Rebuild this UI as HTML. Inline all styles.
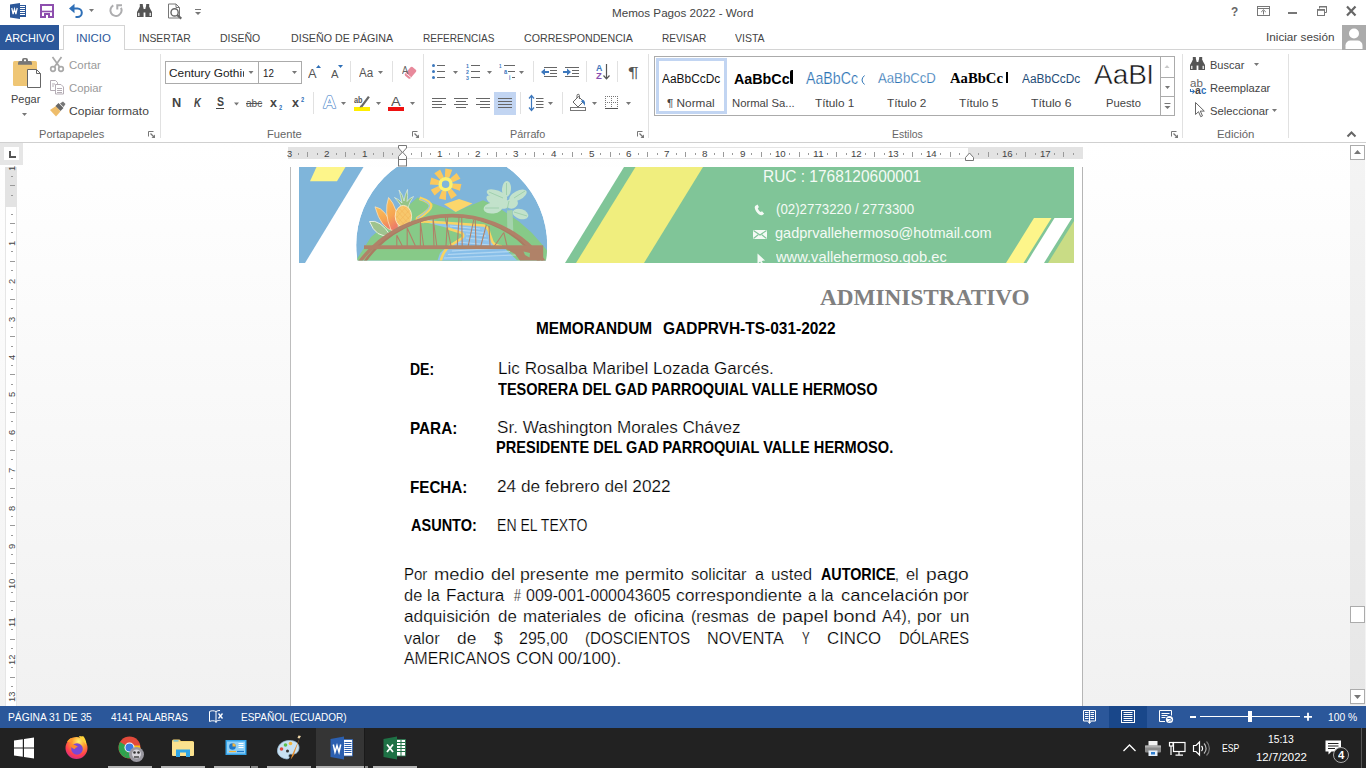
<!DOCTYPE html>
<html><head><meta charset="utf-8"><title>Memos Pagos 2022 - Word</title>
<style>
html,body{margin:0;padding:0;}
body{width:1366px;height:768px;overflow:hidden;position:relative;background:#fff;font-family:"Liberation Sans",sans-serif;}
#r{position:absolute;left:0;top:0;width:1366px;height:768px;overflow:hidden;}
#r div,#r svg,#r span.t{position:absolute;}
#r svg{overflow:visible;}
span.t{white-space:pre;transform-origin:0 0;}
</style></head>
<body><div id="r">
<div style="left:0px;top:143px;width:1366px;height:563px;background:linear-gradient(#ffffff,#fbfbfb 30%,#f1f1f1);"></div>
<div style="left:0px;top:49px;width:1366px;height:1px;background:#d4d4d4;"></div>
<div style="left:0px;top:25px;width:59px;height:25px;background:#2b579a;"></div>
<div style="left:63px;top:25px;width:60px;height:24px;background:#fff;border:1px solid #d4d4d4;border-bottom:none;"></div>
<div style="left:1342px;top:25px;width:24px;height:25px;background:#ababab;"></div>
<div style="left:0px;top:142px;width:1366px;height:1px;background:#d0d0d0;"></div>
<div style="left:160px;top:54px;width:1px;height:84px;background:#e1e1e1;"></div>
<div style="left:423px;top:54px;width:1px;height:84px;background:#e1e1e1;"></div>
<div style="left:648px;top:54px;width:1px;height:84px;background:#e1e1e1;"></div>
<div style="left:1182px;top:54px;width:1px;height:84px;background:#e1e1e1;"></div>
<div style="left:1288px;top:54px;width:1px;height:84px;background:#e1e1e1;"></div>
<div style="left:165px;top:61px;width:92px;height:21px;background:#fff;border:1px solid #ababab;"></div>
<div style="left:258px;top:61px;width:42px;height:21px;background:#fff;border:1px solid #ababab;"></div>
<div style="left:242.5px;top:70.5px;width:1.5px;height:6.5px;background:#444;border-radius:1px 0 0 1px;"></div>
<div style="left:350px;top:61px;width:1px;height:21px;background:#e1e1e1;"></div>
<div style="left:392px;top:61px;width:1px;height:21px;background:#e1e1e1;"></div>
<div style="left:216px;top:108px;width:8px;height:1px;background:#444;"></div>
<div style="left:313px;top:92px;width:1px;height:22px;background:#e1e1e1;"></div>
<div style="left:354px;top:107px;width:16px;height:4px;background:#ffee00;"></div>
<div style="left:388px;top:107px;width:16px;height:4px;background:#ee1111;"></div>
<div style="left:533px;top:61px;width:1px;height:21px;background:#e1e1e1;"></div>
<div style="left:586px;top:61px;width:1px;height:21px;background:#e1e1e1;"></div>
<div style="left:617px;top:61px;width:1px;height:21px;background:#e1e1e1;"></div>
<div style="left:494px;top:92px;width:22px;height:23px;background:#c2d5f2;"></div>
<div style="left:520px;top:92px;width:1px;height:22px;background:#e1e1e1;"></div>
<div style="left:562px;top:92px;width:1px;height:22px;background:#e1e1e1;"></div>
<div style="left:654px;top:56px;width:519px;height:58px;background:#fff;border:1px solid #ababab;"></div>
<div style="left:656px;top:58px;width:65px;height:50px;background:#fff;border:3px solid #c2d5f2;"></div>
<div style="left:790px;top:70px;width:2.5px;height:14px;background:#000;border-radius:2px 0 0 2px;"></div>
<div style="left:1006px;top:72px;width:2px;height:11px;background:#000;"></div>
<div style="left:1090px;top:65px;width:64px;height:24px;overflow:hidden;"><span class="t" id="aab" style="left:4px;top:-3.900px;font-size:28px;line-height:28px;color:#111;-webkit-text-stroke:0.500px #fff;transform:scaleX(1.0);">AaBl</span></div>
<div style="left:1160px;top:56px;width:1px;height:59px;background:#ababab;"></div>
<div style="left:1161px;top:77px;width:13px;height:1px;background:#ababab;"></div>
<div style="left:1161px;top:96px;width:13px;height:1px;background:#ababab;"></div>
<div style="left:0px;top:143px;width:23px;height:22px;background:#e6e6e6;"></div>
<div style="left:4px;top:147px;width:15px;height:13px;background:#fff;"></div>
<div style="left:288px;top:147px;width:795px;height:12px;background:#e3e3e3;"></div>
<div style="left:402px;top:147px;width:566px;height:12px;background:#fff;box-shadow:0 -1px 0 #e4e4e4 inset,0 1px 0 #e4e4e4 inset;"></div>
<div style="left:298px;top:153px;width:1px;height:2px;background:#9a9a9a;"></div>
<div style="left:307px;top:152px;width:1px;height:5px;background:#9a9a9a;"></div>
<div style="left:317px;top:153px;width:1px;height:2px;background:#9a9a9a;"></div>
<div style="left:336px;top:153px;width:1px;height:2px;background:#9a9a9a;"></div>
<div style="left:345px;top:152px;width:1px;height:5px;background:#9a9a9a;"></div>
<div style="left:354px;top:153px;width:1px;height:2px;background:#9a9a9a;"></div>
<div style="left:373px;top:153px;width:1px;height:2px;background:#9a9a9a;"></div>
<div style="left:383px;top:152px;width:1px;height:5px;background:#9a9a9a;"></div>
<div style="left:392px;top:153px;width:1px;height:2px;background:#9a9a9a;"></div>
<div style="left:411px;top:153px;width:1px;height:2px;background:#9a9a9a;"></div>
<div style="left:421px;top:152px;width:1px;height:5px;background:#9a9a9a;"></div>
<div style="left:430px;top:153px;width:1px;height:2px;background:#9a9a9a;"></div>
<div style="left:449px;top:153px;width:1px;height:2px;background:#9a9a9a;"></div>
<div style="left:458px;top:152px;width:1px;height:5px;background:#9a9a9a;"></div>
<div style="left:468px;top:153px;width:1px;height:2px;background:#9a9a9a;"></div>
<div style="left:487px;top:153px;width:1px;height:2px;background:#9a9a9a;"></div>
<div style="left:496px;top:152px;width:1px;height:5px;background:#9a9a9a;"></div>
<div style="left:506px;top:153px;width:1px;height:2px;background:#9a9a9a;"></div>
<div style="left:525px;top:153px;width:1px;height:2px;background:#9a9a9a;"></div>
<div style="left:534px;top:152px;width:1px;height:5px;background:#9a9a9a;"></div>
<div style="left:543px;top:153px;width:1px;height:2px;background:#9a9a9a;"></div>
<div style="left:562px;top:153px;width:1px;height:2px;background:#9a9a9a;"></div>
<div style="left:572px;top:152px;width:1px;height:5px;background:#9a9a9a;"></div>
<div style="left:581px;top:153px;width:1px;height:2px;background:#9a9a9a;"></div>
<div style="left:600px;top:153px;width:1px;height:2px;background:#9a9a9a;"></div>
<div style="left:610px;top:152px;width:1px;height:5px;background:#9a9a9a;"></div>
<div style="left:619px;top:153px;width:1px;height:2px;background:#9a9a9a;"></div>
<div style="left:638px;top:153px;width:1px;height:2px;background:#9a9a9a;"></div>
<div style="left:647px;top:152px;width:1px;height:5px;background:#9a9a9a;"></div>
<div style="left:657px;top:153px;width:1px;height:2px;background:#9a9a9a;"></div>
<div style="left:676px;top:153px;width:1px;height:2px;background:#9a9a9a;"></div>
<div style="left:685px;top:152px;width:1px;height:5px;background:#9a9a9a;"></div>
<div style="left:695px;top:153px;width:1px;height:2px;background:#9a9a9a;"></div>
<div style="left:714px;top:153px;width:1px;height:2px;background:#9a9a9a;"></div>
<div style="left:723px;top:152px;width:1px;height:5px;background:#9a9a9a;"></div>
<div style="left:732px;top:153px;width:1px;height:2px;background:#9a9a9a;"></div>
<div style="left:751px;top:153px;width:1px;height:2px;background:#9a9a9a;"></div>
<div style="left:761px;top:152px;width:1px;height:5px;background:#9a9a9a;"></div>
<div style="left:770px;top:153px;width:1px;height:2px;background:#9a9a9a;"></div>
<div style="left:789px;top:153px;width:1px;height:2px;background:#9a9a9a;"></div>
<div style="left:799px;top:152px;width:1px;height:5px;background:#9a9a9a;"></div>
<div style="left:808px;top:153px;width:1px;height:2px;background:#9a9a9a;"></div>
<div style="left:827px;top:153px;width:1px;height:2px;background:#9a9a9a;"></div>
<div style="left:836px;top:152px;width:1px;height:5px;background:#9a9a9a;"></div>
<div style="left:846px;top:153px;width:1px;height:2px;background:#9a9a9a;"></div>
<div style="left:865px;top:153px;width:1px;height:2px;background:#9a9a9a;"></div>
<div style="left:874px;top:152px;width:1px;height:5px;background:#9a9a9a;"></div>
<div style="left:884px;top:153px;width:1px;height:2px;background:#9a9a9a;"></div>
<div style="left:903px;top:153px;width:1px;height:2px;background:#9a9a9a;"></div>
<div style="left:912px;top:152px;width:1px;height:5px;background:#9a9a9a;"></div>
<div style="left:921px;top:153px;width:1px;height:2px;background:#9a9a9a;"></div>
<div style="left:940px;top:153px;width:1px;height:2px;background:#9a9a9a;"></div>
<div style="left:950px;top:152px;width:1px;height:5px;background:#9a9a9a;"></div>
<div style="left:959px;top:153px;width:1px;height:2px;background:#9a9a9a;"></div>
<div style="left:978px;top:153px;width:1px;height:2px;background:#9a9a9a;"></div>
<div style="left:988px;top:152px;width:1px;height:5px;background:#9a9a9a;"></div>
<div style="left:997px;top:153px;width:1px;height:2px;background:#9a9a9a;"></div>
<div style="left:1016px;top:153px;width:1px;height:2px;background:#9a9a9a;"></div>
<div style="left:1025px;top:152px;width:1px;height:5px;background:#9a9a9a;"></div>
<div style="left:1035px;top:153px;width:1px;height:2px;background:#9a9a9a;"></div>
<div style="left:1054px;top:153px;width:1px;height:2px;background:#9a9a9a;"></div>
<div style="left:1063px;top:152px;width:1px;height:5px;background:#9a9a9a;"></div>
<div style="left:1073px;top:153px;width:1px;height:2px;background:#9a9a9a;"></div>
<div style="left:4.5px;top:167px;width:12px;height:539px;background:#fff;box-shadow:1px 0 0 #e6e6e6 inset,-1px 0 0 #e6e6e6 inset;"></div>
<div style="left:4.5px;top:167px;width:12px;height:39.5px;background:#e3e3e3;"></div>
<span class="t" style="left:7px;top:170.5px;font-size:9.500px;line-height:9.500px;color:#444;transform:rotate(-90deg) scaleX(0.980);transform-origin:0 0;">1</span>
<div style="left:11px;top:176px;width:2px;height:1px;background:#9a9a9a;"></div>
<div style="left:10px;top:185px;width:5px;height:1px;background:#9a9a9a;"></div>
<div style="left:11px;top:195px;width:2px;height:1px;background:#9a9a9a;"></div>
<div style="left:11px;top:214px;width:2px;height:1px;background:#9a9a9a;"></div>
<div style="left:10px;top:223px;width:5px;height:1px;background:#9a9a9a;"></div>
<div style="left:11px;top:232px;width:2px;height:1px;background:#9a9a9a;"></div>
<span class="t" style="left:7px;top:246.1px;font-size:9.500px;line-height:9.500px;color:#444;transform:rotate(-90deg) scaleX(0.980);transform-origin:0 0;">1</span>
<div style="left:11px;top:251px;width:2px;height:1px;background:#9a9a9a;"></div>
<div style="left:10px;top:261px;width:5px;height:1px;background:#9a9a9a;"></div>
<div style="left:11px;top:270px;width:2px;height:1px;background:#9a9a9a;"></div>
<span class="t" style="left:7px;top:283.9px;font-size:9.500px;line-height:9.500px;color:#444;transform:rotate(-90deg) scaleX(0.980);transform-origin:0 0;">2</span>
<div style="left:11px;top:289px;width:2px;height:1px;background:#9a9a9a;"></div>
<div style="left:10px;top:299px;width:5px;height:1px;background:#9a9a9a;"></div>
<div style="left:11px;top:308px;width:2px;height:1px;background:#9a9a9a;"></div>
<span class="t" style="left:7px;top:321.7px;font-size:9.500px;line-height:9.500px;color:#444;transform:rotate(-90deg) scaleX(0.980);transform-origin:0 0;">3</span>
<div style="left:11px;top:327px;width:2px;height:1px;background:#9a9a9a;"></div>
<div style="left:10px;top:336px;width:5px;height:1px;background:#9a9a9a;"></div>
<div style="left:11px;top:346px;width:2px;height:1px;background:#9a9a9a;"></div>
<span class="t" style="left:7px;top:359.5px;font-size:9.500px;line-height:9.500px;color:#444;transform:rotate(-90deg) scaleX(0.980);transform-origin:0 0;">4</span>
<div style="left:11px;top:365px;width:2px;height:1px;background:#9a9a9a;"></div>
<div style="left:10px;top:374px;width:5px;height:1px;background:#9a9a9a;"></div>
<div style="left:11px;top:384px;width:2px;height:1px;background:#9a9a9a;"></div>
<span class="t" style="left:7px;top:397.3px;font-size:9.500px;line-height:9.500px;color:#444;transform:rotate(-90deg) scaleX(0.980);transform-origin:0 0;">5</span>
<div style="left:11px;top:403px;width:2px;height:1px;background:#9a9a9a;"></div>
<div style="left:10px;top:412px;width:5px;height:1px;background:#9a9a9a;"></div>
<div style="left:11px;top:421px;width:2px;height:1px;background:#9a9a9a;"></div>
<span class="t" style="left:7px;top:435.1px;font-size:9.500px;line-height:9.500px;color:#444;transform:rotate(-90deg) scaleX(0.980);transform-origin:0 0;">6</span>
<div style="left:11px;top:440px;width:2px;height:1px;background:#9a9a9a;"></div>
<div style="left:10px;top:450px;width:5px;height:1px;background:#9a9a9a;"></div>
<div style="left:11px;top:459px;width:2px;height:1px;background:#9a9a9a;"></div>
<span class="t" style="left:7px;top:472.9px;font-size:9.500px;line-height:9.500px;color:#444;transform:rotate(-90deg) scaleX(0.980);transform-origin:0 0;">7</span>
<div style="left:11px;top:478px;width:2px;height:1px;background:#9a9a9a;"></div>
<div style="left:10px;top:488px;width:5px;height:1px;background:#9a9a9a;"></div>
<div style="left:11px;top:497px;width:2px;height:1px;background:#9a9a9a;"></div>
<span class="t" style="left:7px;top:510.7px;font-size:9.500px;line-height:9.500px;color:#444;transform:rotate(-90deg) scaleX(0.980);transform-origin:0 0;">8</span>
<div style="left:11px;top:516px;width:2px;height:1px;background:#9a9a9a;"></div>
<div style="left:10px;top:525px;width:5px;height:1px;background:#9a9a9a;"></div>
<div style="left:11px;top:535px;width:2px;height:1px;background:#9a9a9a;"></div>
<span class="t" style="left:7px;top:548.5px;font-size:9.500px;line-height:9.500px;color:#444;transform:rotate(-90deg) scaleX(0.980);transform-origin:0 0;">9</span>
<div style="left:11px;top:554px;width:2px;height:1px;background:#9a9a9a;"></div>
<div style="left:10px;top:563px;width:5px;height:1px;background:#9a9a9a;"></div>
<div style="left:11px;top:573px;width:2px;height:1px;background:#9a9a9a;"></div>
<span class="t" style="left:7px;top:588.9px;font-size:9.500px;line-height:9.500px;color:#444;transform:rotate(-90deg) scaleX(0.980);transform-origin:0 0;">10</span>
<div style="left:11px;top:592px;width:2px;height:1px;background:#9a9a9a;"></div>
<div style="left:10px;top:601px;width:5px;height:1px;background:#9a9a9a;"></div>
<div style="left:11px;top:610px;width:2px;height:1px;background:#9a9a9a;"></div>
<span class="t" style="left:7px;top:626.7px;font-size:9.500px;line-height:9.500px;color:#444;transform:rotate(-90deg) scaleX(0.980);transform-origin:0 0;">11</span>
<div style="left:11px;top:629px;width:2px;height:1px;background:#9a9a9a;"></div>
<div style="left:10px;top:639px;width:5px;height:1px;background:#9a9a9a;"></div>
<div style="left:11px;top:648px;width:2px;height:1px;background:#9a9a9a;"></div>
<span class="t" style="left:7px;top:664.5px;font-size:9.500px;line-height:9.500px;color:#444;transform:rotate(-90deg) scaleX(0.980);transform-origin:0 0;">12</span>
<div style="left:11px;top:667px;width:2px;height:1px;background:#9a9a9a;"></div>
<div style="left:10px;top:677px;width:5px;height:1px;background:#9a9a9a;"></div>
<div style="left:11px;top:686px;width:2px;height:1px;background:#9a9a9a;"></div>
<span class="t" style="left:7px;top:702.3px;font-size:9.500px;line-height:9.500px;color:#444;transform:rotate(-90deg) scaleX(0.980);transform-origin:0 0;">13</span>
<div style="left:1350px;top:145px;width:15px;height:560px;background:rgba(0,0,0,0.045);"></div>
<div style="left:1350px;top:145px;width:13px;height:13px;background:#fff;border:1px solid #ababab;"></div>
<div style="left:1350px;top:689px;width:13px;height:13px;background:#fff;border:1px solid #ababab;"></div>
<div style="left:1350px;top:606px;width:13px;height:15px;background:#fff;border:1px solid #ababab;"></div>
<div style="left:290px;top:167px;width:793px;height:539px;background:#fff;box-sizing:border-box;border-left:1px solid #bdbdbd;border-right:1px solid #b5b5b5;"></div>
<svg style="left:299px;top:167px;overflow:hidden;" width="775" height="96" viewBox="299 167 775 96"><path d="M299 167h64.500L305 263h-6z" fill="#7fb5da"/><path d="M316.500 167h29l-8.500 14.300h-27z" fill="#fdf58a"/><clipPath id="ec"><rect x="350" y="167" width="205" height="93.500"/></clipPath><clipPath id="cc"><circle cx="451.700" cy="245" r="95.500"/></clipPath><g clip-path="url(#ec)"><g clip-path="url(#cc)"><circle cx="451.700" cy="245" r="95.500" fill="#7fb5da"/><path d="M440 262L455 212L483 200.200L497 206.500L508 214L519 221.500L532 233L543 245.600L549 253V262z" fill="#87ca88"/><path d="M355 262L371 237L417.600 197.500L436 204.500L455.700 211.700L462 262z" fill="#87ca88"/><path d="M444 204.300L459 199L472.500 203.600L455.700 211.900z" fill="#fbd66b"/><path d="M424 219.500L448 222L484 224.800L488.500 232.500L491.700 242.300L501.600 245.600L519 262H437L440 253L447 246.500L451 244.500L463 237L462 232.500L448 228L424 222z" fill="#8fc4ec"/><g stroke="#cfe5f7" stroke-width="0.600" fill="none"><path d="M450 226l30 3M452 229.500l32 3M466 234l20 2M466 238l22 2M458 242l32 3M452 251l50-3M448 254.500l62-3M444 258l72-3M470 246.500l24 1"/></g><g stroke="#77b2e2" stroke-width="0.500" fill="none"><path d="M452 227.800l30 3M468 236l20 2M460 244l30 2M450 252.800l55-3M446 256.300l66-3"/></g><path d="M424 221.500L448 223L484 225.500Q488.500 227 489.500 233.500L492.500 242Q495 246 502 246.300" fill="none" stroke="#f9d462" stroke-width="2.400"/><path d="M448 228.500L461.500 232.800Q465 235.500 461.500 238.500L451.500 244.800Q443 250 440.500 262" fill="none" stroke="#f9d462" stroke-width="2.600"/><path d="M419.500 198.300Q431 202 430.700 206.200T417.600 218.300Q416 221 424 221.500" fill="none" stroke="#f9d462" stroke-width="3.600"/><path d="M420.500 199.200Q430 202.500 429.500 206.200T417.300 218.300" fill="none" stroke="#8fc4ec" stroke-width="1.100"/><g transform="translate(445.600 184.200)" fill="#fbc95e"><path d="M-2.300 -7L-3.500 -15.400H3.500L2.300 -7z" transform="rotate(12)"/><path d="M-2.300 -7L-3.500 -15.400H3.500L2.300 -7z" transform="rotate(57)"/><path d="M-2.300 -7L-3.500 -15.400H3.500L2.300 -7z" transform="rotate(102)"/><path d="M-2.300 -7L-3.500 -15.400H3.500L2.300 -7z" transform="rotate(147)"/><path d="M-2.300 -7L-3.500 -15.400H3.500L2.300 -7z" transform="rotate(192)"/><path d="M-2.300 -7L-3.500 -15.400H3.500L2.300 -7z" transform="rotate(237)"/><path d="M-2.300 -7L-3.500 -15.400H3.500L2.300 -7z" transform="rotate(282)"/><path d="M-2.300 -7L-3.500 -15.400H3.500L2.300 -7z" transform="rotate(327)"/></g><circle cx="445.600" cy="184.200" r="5.500" fill="none" stroke="#fdf16d" stroke-width="3.500"/><path d="M507 210.500l5.500-.500.800 21.500h-6z" fill="#a4d3ad"/><g fill="#c2e2cb"><ellipse cx="506.5" cy="189" rx="4.5" ry="8" transform="rotate(5 506.5 189)"/><ellipse cx="497" cy="195" rx="11" ry="4.5" transform="rotate(22 497 195)"/><ellipse cx="518" cy="195.5" rx="9.5" ry="4.5" transform="rotate(-28 518 195.5)"/><ellipse cx="493" cy="208" rx="9.5" ry="5.5" transform="rotate(-8 493 208)"/><ellipse cx="520.5" cy="214" rx="8" ry="5" transform="rotate(18 520.5 214)"/><ellipse cx="502" cy="203" rx="7.5" ry="5.5" transform="rotate(20 502 203)"/><ellipse cx="512" cy="203.5" rx="6" ry="5" transform="rotate(-20 512 203.5)"/><ellipse cx="492.5" cy="200.5" rx="7" ry="3.5" transform="rotate(35 492.5 200.5)"/></g><g stroke="#92c9a2" stroke-width="0.700" fill="none"><path d="M506.500 183v12M489 192l14 6M525 191l-11 7M485 208h14M514 212l13 4M509 201l-2 9"/></g><defs><linearGradient id="cg" x1="0" y1="0" x2="0.300" y2="1"><stop offset="0" stop-color="#f9c05a"/><stop offset="0.600" stop-color="#f6a652"/><stop offset="1" stop-color="#ee7d68"/></linearGradient></defs><path d="M369.500 221.500Q380 219 390.500 235.500Q376 238.500 369.500 221.500z" fill="#9fc38e" stroke="#f1f5ea" stroke-width="0.900"/><path d="M375 206.800Q386 208 394 231Q381 229 375 206.800z" fill="url(#cg)" stroke="#fbe6c4" stroke-width="0.700"/><path d="M388.600 197.500Q398 207 398.500 229.500Q394 232 391 230Q383.500 212 388.600 197.500z" fill="url(#cg)" stroke="#fbe6c4" stroke-width="0.700"/><path d="M403 210q-1.500-5-8.500-12.500q5 2 7.500 5.500q-1.500-8-3-13q4 5 5 11q1-7 3.500-11.500q.5 6-.5 12q3-4 6.500-5q-4 5-6 12.500z" fill="#95c487" stroke="#eef5e8" stroke-width="0.600"/><ellipse cx="403.400" cy="216.300" rx="8.200" ry="10.900" fill="#f7c76c" stroke="#fcecc9" stroke-width="0.900"/><g stroke="#f3b257" stroke-width="0.500"><path d="M397 211l10 11M399 208l10 11M396.500 216l8 9M403 206.500l8 9M409.500 210l-12 13M406 207l-10 11M411 215l-10 11M401.500 206.500l-5 5.500"/></g><path d="M396.8 235.2L396.8 246M396.8 235.2L402.3 246M407.2 228L407.2 246M407.2 228L415.4 246M420.4 222L423.6 246M420.4 222L420.4 246M433 217.7L434 246M433 217.7L436.8 246M445 216L451 246M447.7 216L446 246M459 217L457.3 246M461.7 217L462.2 246M473.7 220L468.2 246M475.3 220L475.9 246M486.3 224.8L480.8 246M489 226L490 246M503.8 232.5L494.5 246M503.8 232.5L507 246" stroke="#b08268" stroke-width="1.100" fill="none"/><circle cx="452" cy="322" r="106" fill="none" stroke="#ab7c62" stroke-width="2.600"/><circle cx="452" cy="330.500" r="115" fill="none" stroke="#b08268" stroke-width="3.500"/><path d="M506 249H543.200V262H521L515 254z" fill="#b08268"/><path d="M523.500 251.500l6.500 1.500-.500 4.500-4.500-2.500z" fill="#87ca88"/><rect x="364" y="245.300" width="179.200" height="3.800" fill="#b08268"/></g></g><path d="M624 167h450v96H565z" fill="#80c598"/><path d="M635.500 167h67.500L644 263h-68z" fill="#f0ee7e"/><path d="M1034 218h17.500l-28 45H1006z" fill="#fdf58a"/><path d="M1054.500 218h17.500l-28 45h-17.500z" fill="#fff"/><path d="M1074 221v42h-26z" fill="#c9dc85"/><path d="M756 205.500c-1.800.8-1.600 3.200.200 6 1.900 2.900 4.600 4.600 6.300 3.500l1.700-1.300-2.200-2.500-1.300.8c-.9-.2-2.800-2.500-2.900-3.900l1.200-.9-1.500-2.600z" fill="#f4faf5"/><rect x="753" y="230" width="14" height="9" fill="#f4faf5"/><path d="M753.500 230.500l6.500 4.500 6.500-4.500M753.500 238.500l4.700-3.700M766.500 238.500l-4.700-3.700" fill="none" stroke="#80c598" stroke-width="1.100"/><path d="M757.500 253.500v10.500l2.600-2.400 1.800 3.400 1.600-.800-1.800-3.300 3.400-.300z" fill="#f4faf5"/></svg>
<div style="left:0px;top:706px;width:1366px;height:22px;background:#2b579a;"></div>
<div style="left:1109px;top:706px;width:38px;height:22px;background:#19478a;"></div>
<div style="left:1190px;top:716px;width:6px;height:2px;background:#fff;"></div>
<div style="left:1200px;top:716px;width:100px;height:1px;background:#fff;"></div>
<div style="left:1248px;top:711px;width:4px;height:11px;background:#fff;"></div>
<div style="left:0px;top:728px;width:1366px;height:40px;background:#222222;"></div>
<div style="left:316px;top:728px;width:48px;height:40px;background:#353535;"></div>
<div style="left:364px;top:728px;width:1px;height:40px;background:#1a1a1a;"></div>
<div style="left:108px;top:766px;width:44px;height:2px;background:#b4b4b4;"></div>
<div style="left:161px;top:766px;width:44px;height:2px;background:#b4b4b4;"></div>
<div style="left:214px;top:766px;width:36px;height:2px;background:#b4b4b4;"></div>
<div style="left:267px;top:766px;width:44px;height:2px;background:#b4b4b4;"></div>
<div style="left:316px;top:766px;width:48px;height:2px;background:#b4b4b4;"></div>
<div style="left:373px;top:766px;width:44px;height:2px;background:#b4b4b4;"></div>
<div style="left:250px;top:766px;width:1px;height:2px;background:#222;"></div>
<div style="left:251px;top:766px;width:7px;height:2px;background:#8a8a8a;"></div>
<div style="left:365px;top:766px;width:3px;height:2px;background:#8a8a8a;"></div>
<div style="left:1361px;top:728px;width:1px;height:40px;background:#555;"></div>
<svg style="left:0px;top:0px;" width="1366" height="768" viewBox="0 0 1366 768"><rect x="17.5" y="5.5" width="8" height="11" fill="#fff" stroke="#2b579a"/><path d="M19 7.500h6M19 9.500h6M19 11.500h6M19 13.500h6M19 15.500h6" stroke="#2b579a" stroke-width="1"/><path d="M10 4.6L20 3v16L10 17.4z" fill="#2b579a"/><path d="M11.8 8l1.3 6 1.4-5 1.4 5 1.3-6" fill="none" stroke="#fff" stroke-width="1.2"/><path d="M41 5h12v12H41z" fill="#fff" stroke="#8e4fae" stroke-width="2"/><path d="M41 11.5h12" stroke="#8e4fae" stroke-width="1.6"/><path d="M44 13h6v5h-6z" fill="#8e4fae"/><path d="M46 15h2v3h-2z" fill="#fff"/><path d="M71 8.5h6.5a4.3 4.3 0 0 1 0 8.6h-2" fill="none" stroke="#2e6fb7" stroke-width="2"/><path d="M69 8.5l5.5-4.7v9.4z" fill="#2e6fb7"/><path d="M89 9h5l-2.5 3z" fill="#777"/><path d="M113.300 5.400A5.600 5.600 0 1 0 121 7.800" fill="none" stroke="#adadaf" stroke-width="2"/><path d="M117.300 9.500V5.200H122" fill="none" stroke="#adadaf" stroke-width="2"/><g transform="translate(137 4)" fill="#555"><path d="M2 4.5L3.2 1.5h2.6L6.6 4.5V13H0V8z"/><path d="M13 4.5L11.8 1.5H9.2L8.4 4.5V13H15V8z"/><rect x="2.8" y="0" width="3" height="2"/><rect x="9.2" y="0" width="3" height="2"/><rect x="6" y="5" width="3" height="3.5"/><rect x="1.2" y="8.8" width="1.2" height="3.2" fill="#fff"/><rect x="12.6" y="8.8" width="1.2" height="3.2" fill="#fff"/></g><path d="M168.5 4h7.5l3.5 3.5V18h-11z" fill="#fff" stroke="#777" stroke-width="1"/><path d="M176 4v3.5h3.5" fill="none" stroke="#777"/><circle cx="174.6" cy="12.4" r="3.6" fill="#fff" stroke="#666" stroke-width="1.4"/><path d="M177.3 15.2l4 3.4" stroke="#666" stroke-width="2.2"/><path d="M195 9.5h6" stroke="#777"/><path d="M195 12h6l-3 3z" fill="#777"/><rect x="1257.5" y="6.5" width="12" height="9" fill="none" stroke="#777"/><path d="M1258 8.5h11" stroke="#777"/><path d="M1263.5 14.5v-4M1261.2 12l2.3-2.2 2.3 2.2" fill="none" stroke="#777" stroke-width="1"/><rect x="1288" y="12" width="9" height="2" fill="#777"/><path d="M1319.5 8.5v-2h7v6h-2" fill="none" stroke="#777"/><path d="M1319 6.8h8" stroke="#777" stroke-width="1.4"/><rect x="1317.500" y="9.5" width="7" height="6" fill="#fff" stroke="#777"/><path d="M1317 10h8" stroke="#777" stroke-width="1.6"/><path d="M1347 6.5l8.500 9M1355.500 6.5l-8.500 9" stroke="#666" stroke-width="2.2"/><circle cx="1354" cy="33.500" r="5" fill="#fff"/><path d="M1345.500 49v-3.500a5 5 0 0 1 5-5h7a5 5 0 0 1 5 5V49z" fill="#fff"/><path d="M148.5 136.5V131.5H153.5" fill="none" stroke="#777" stroke-width="1"/><path d="M150.5 133.5L154.5 137.5" stroke="#777" stroke-width="1.2"/><path d="M155 134.5V138H151.5z" fill="#777"/><path d="M412.5 136.5V131.5H417.5" fill="none" stroke="#777" stroke-width="1"/><path d="M414.5 133.5L418.5 137.5" stroke="#777" stroke-width="1.2"/><path d="M419 134.5V138H415.5z" fill="#777"/><path d="M637.5 136.5V131.5H642.5" fill="none" stroke="#777" stroke-width="1"/><path d="M639.5 133.5L643.5 137.5" stroke="#777" stroke-width="1.2"/><path d="M644 134.5V138H640.5z" fill="#777"/><path d="M1171.5 136.5V131.5H1176.5" fill="none" stroke="#777" stroke-width="1"/><path d="M1173.5 133.5L1177.5 137.5" stroke="#777" stroke-width="1.2"/><path d="M1178 134.5V138H1174.5z" fill="#777"/><path d="M1347.500 136.500l4-4 4 4" fill="none" stroke="#666" stroke-width="2"/><rect x="13" y="61" width="24" height="25" rx="1.5" fill="#efc675"/><path d="M18 64.700v-1.700a2 2 0 0 1 2-2h2v-1a2 2 0 0 1 2-2h2a2 2 0 0 1 2 2v1h2a2 2 0 0 1 2 2v1.700z" fill="#777"/><rect x="24" y="59.500" width="2" height="1.700" fill="#fff"/><path d="M27.500 69.500h9l4 4v14h-13z" fill="#fff" stroke="#666"/><path d="M36.500 69.500v4h4" fill="none" stroke="#666"/><path d="M22 113h5l-2.5 3z" fill="#777"/><g fill="none" stroke="#a9a9a9" stroke-width="1.700"><path d="M52.500 57l7.500 10.500M61.500 57l-7.500 10.500"/><circle cx="53" cy="69" r="2.300"/><circle cx="61" cy="69" r="2.300"/></g><g fill="#fff" stroke="#b5adb5" stroke-width="1"><path d="M50.500 80.500h5l2 2v8h-7z"/><path d="M55.500 84.500h5.500l2.500 2.500v7h-8z"/></g><path d="M57 88.500h5M57 90.500h5M57 92.500h5M52 84h3M52 86h2" stroke="#b5adb5" stroke-width="1"/><path d="M50 110l6-4 4.500 5.500-4.500 5z" fill="#eebd6b"/><path d="M55.500 106l3-3 5 5-3 3z" fill="#666"/><path d="M60 103.500l3-2 2.500 2.500-2 3z" fill="#777"/><path d="M248.5 71h5l-2.5 3z" fill="#777"/><path d="M292 71h5l-2.5 3z" fill="#777"/><path d="M316 68l2.500-3 2.500 3z" fill="#2e6fb7"/><path d="M338 65h5l-2.500 3z" fill="#2e6fb7"/><path d="M378 71h5l-2.5 3z" fill="#777"/><path d="M410.500 67.300a1.500 1.500 0 0 1 2-.200l3.300 2.700a1.500 1.500 0 0 1 .200 2l-5.500 6.500a1.500 1.500 0 0 1-2 .200l-3.300-2.700a1.500 1.500 0 0 1-.200-2z" fill="#e8899b"/><path d="M405.600 73l5.400 4.500" stroke="#fff" stroke-width="0.900"/><path d="M234 102.5h5l-2.5 3z" fill="#777"/><path d="M341 102h5l-2.5 3z" fill="#777"/><path d="M360.500 106l7.500-10 1.800 1.300-7.500 10z" fill="#666"/><path d="M359.500 107.500l1-2 2 1.500z" fill="#666"/><path d="M376 102h5l-2.5 3z" fill="#777"/><path d="M410 102h5l-2.5 3z" fill="#777"/><circle cx="433.500" cy="65.5" r="1.500" fill="#3d78bd"/><path d="M437 65.5h8" stroke="#666" stroke-width="1"/><circle cx="433.500" cy="71.5" r="1.500" fill="#3d78bd"/><path d="M437 71.5h8" stroke="#666" stroke-width="1"/><circle cx="433.500" cy="77.5" r="1.500" fill="#3d78bd"/><path d="M437 77.5h8" stroke="#666" stroke-width="1"/><path d="M453 71h5l-2.5 3z" fill="#777"/><path d="M471 65.5h9" stroke="#666" stroke-width="1"/><path d="M471 71.5h9" stroke="#666" stroke-width="1"/><path d="M471 77.5h9" stroke="#666" stroke-width="1"/><path d="M487 71h5l-2.5 3z" fill="#777"/><path d="M504 65.500h11" stroke="#666"/><path d="M508 71.500h7" stroke="#666"/><path d="M512 77.500h3" stroke="#666"/><path d="M519 71h5l-2.5 3z" fill="#777"/><path d="M544 67.500h13M550 70.500h7M550 73.500h7M544 76.500h13" stroke="#666"/><path d="M541 72l4-3.500v2.500h4v2h-4v2.500z" fill="#3d78bd"/><path d="M565 67.500h14M572 70.500h7M572 73.500h7M565 76.500h14" stroke="#666"/><path d="M571 72l-4-3.500v2.500h-4v2h4v2.500z" fill="#3d78bd"/><path d="M606.500 64v14M603.500 75.500l3 3.300 3-3.300" fill="none" stroke="#555" stroke-width="1.200"/><path d="M432 98.5h14" stroke="#666" stroke-width="1"/><path d="M432 101.5h10" stroke="#666" stroke-width="1"/><path d="M432 104.5h14" stroke="#666" stroke-width="1"/><path d="M432 107.5h10" stroke="#666" stroke-width="1"/><path d="M454.0 98.5h14" stroke="#666" stroke-width="1"/><path d="M456.0 101.5h10" stroke="#666" stroke-width="1"/><path d="M454.0 104.5h14" stroke="#666" stroke-width="1"/><path d="M456.0 107.5h10" stroke="#666" stroke-width="1"/><path d="M476 98.5h14" stroke="#666" stroke-width="1"/><path d="M480 101.5h10" stroke="#666" stroke-width="1"/><path d="M476 104.5h14" stroke="#666" stroke-width="1"/><path d="M480 107.5h10" stroke="#666" stroke-width="1"/><path d="M498 98.5h14" stroke="#666" stroke-width="1"/><path d="M498 101.5h14" stroke="#666" stroke-width="1"/><path d="M498 104.5h14" stroke="#666" stroke-width="1"/><path d="M498 107.5h14" stroke="#666" stroke-width="1"/><path d="M531.500 96v14M529 98.500l2.500-3 2.500 3M529 107.500l2.500 3 2.500-3" fill="none" stroke="#3d78bd" stroke-width="1.200"/><path d="M536 98.500h7.500M536 101.500h7.500M536 104.500h7.500M536 107.500h7.500" stroke="#666"/><path d="M548 102h5l-2.5 3z" fill="#777"/><path d="M573 102l5.500-5.500 5 5-5.500 5.500z" fill="#fff" stroke="#666"/><path d="M577 98v-2.500a1.200 1.200 0 0 1 2.400 0V99" fill="none" stroke="#666"/><path d="M582.500 99.500c2.500 1 3.300 3.500 2 6.500-.5-2-1.500-3.500-3.500-4.500z" fill="#3d78bd"/><rect x="570.500" y="107.500" width="15" height="3" fill="#fff" stroke="#777"/><path d="M592 102h5l-2.5 3z" fill="#777"/><g stroke="#777" stroke-dasharray="1 1"><path d="M605 96.500h13M605 102.500h13M605.500 96v12M611.500 96v12M617.500 96v12"/></g><path d="M605 108.500h13" stroke="#555"/><path d="M626 102h5l-2.5 3z" fill="#777"/><path d="M864.500 75.500Q859.500 80 864.500 84.500" stroke="#2e74b5" fill="none" stroke-width="1"/><path d="M1164.500 68l2.500-3 2.500 3z" fill="#c8c8c8"/><path d="M1165 86h5l-2.5 3z" fill="#777"/><path d="M1164.500 103.500h6" stroke="#777"/><path d="M1164.500 106h6l-3 3z" fill="#777"/><g transform="translate(1190 57)" fill="#555"><path d="M2 4.5L3.2 1.5h2.6L6.6 4.5V13H0V8z"/><path d="M13 4.5L11.8 1.5H9.2L8.4 4.5V13H15V8z"/><rect x="2.8" y="0" width="3" height="2"/><rect x="9.2" y="0" width="3" height="2"/><rect x="6" y="5" width="3" height="3.5"/><rect x="1.2" y="8.8" width="1.2" height="3.2" fill="#fff"/><rect x="12.6" y="8.8" width="1.2" height="3.2" fill="#fff"/></g><path d="M1254 63h5l-2.5 3z" fill="#777"/><path d="M1190.500 89v2.500h3.500M1192.500 89.500l1.800 2-1.800 2" fill="none" stroke="#2e6fb7" stroke-width="1.100"/><path d="M1195.500 102.500v12l3-2.800 2.200 5 1.800-.8-2.200-4.800h4z" fill="#fff" stroke="#666" stroke-width="1" stroke-linejoin="round"/><path d="M1272 109h5l-2.5 3z" fill="#777"/><path d="M10 151v6h6" fill="none" stroke="#555" stroke-width="2"/><path d="M398.500 145.500h8v2.500l-4 4.500-4-4.500z" fill="#fff" stroke="#777"/><path d="M398.500 159v-2.500l4-4.500 4 4.500V159" fill="#fff" stroke="#777"/><rect x="398.500" y="159.500" width="8" height="6.500" fill="#fff" stroke="#777"/><path d="M965.500 160.500v-3l4-4.500 4 4.500v3z" fill="#fff" stroke="#777"/><path d="M1354 154h7l-3.500-4z" fill="#777"/><path d="M1354 695h7l-3.500 4z" fill="#777"/><path d="M216 711.500c-2-1-4.500-1-6.500 0v10c2-1 4.500-1 6.500 0 1.500-1 3-1.300 4.500-1" fill="none" stroke="#fff" stroke-width="1"/><path d="M216 711.500v11.500M216 711.500c1.300-.800 2.500-1 4-1" fill="none" stroke="#fff"/><path d="M218.500 713.500l4 5M222.500 713.500l-4 5" stroke="#fff" stroke-width="1.300"/><g fill="none" stroke="#fff" stroke-width="1"><path d="M1083.500 710.500h12v10.500h-12zM1089.500 710.500v12.500"/><path d="M1085 712.500h3.500M1085 714.500h3.500M1085 716.500h3.500M1085 718.500h3.500M1090.500 712.500h3.500M1090.500 714.500h3.500M1090.500 716.500h3.500M1090.500 718.500h3.500" stroke-width="1"/><path d="M1088 721.500l1.500 2 1.500-2" stroke-width="1"/></g><rect x="1121.500" y="710.500" width="13" height="12" fill="none" stroke="#fff"/><path d="M1123.500 712.500h9M1123.500 714.500h9M1123.500 716.500h9M1123.500 718.500h9M1123.500 720.500h9" stroke="#fff"/><path d="M1165 721.500h-5.500v-11h12v5" fill="none" stroke="#fff"/><path d="M1161.500 713.500h8M1161.500 715.500h6M1161.500 717.500h4" stroke="#fff"/><circle cx="1169.500" cy="719.500" r="3.600" fill="#fff"/><path d="M1167.500 718.500h3l1 1.500-1.500 1.500M1168.500 721.500l1-1" stroke="#2b579a" stroke-width="0.900" fill="none"/><path d="M1304 716.800h8M1308 712.800v8" stroke="#fff" stroke-width="1.800"/><path d="M14 740.500l8.800-1.300v8.300H14zM24 739l10-1.500v10H24zM14 748.500h8.800v8.300L14 755.500zM24 748.500h10v10L24 757z" fill="#fff"/><defs><radialGradient id="ff" cx="0.6" cy="0.200" r="0.900"><stop offset="0" stop-color="#fff36b"/><stop offset="0.350" stop-color="#ff9a2e"/><stop offset="0.700" stop-color="#ff3d50"/><stop offset="1" stop-color="#c2279f"/></radialGradient></defs><circle cx="76.500" cy="748" r="11" fill="url(#ff)"/><path d="M79 736c1 3 5 5 7 9 1-3-1-7-3-9-1 1-2 0-4 0z" fill="#ffd43a"/><path d="M67 742c1-2 3-4 5-4-1 2 0 3 1 4z" fill="#ff9a2e"/><circle cx="77" cy="749" r="5.800" fill="#7b47d6"/><path d="M70 745c3-1 6 0 8 2-2 0-3 1-3 2-2 0-4-2-5-4z" fill="#ff8a2a"/><circle cx="129.500" cy="747.500" r="11" fill="#e24a3b"/><path d="M129.500 747.500L120 742a11 11 0 0 0 4 15z" fill="#2da44f"/><path d="M129.500 747.500l-5.500 9.500a11 11 0 0 0 15.500-6z" fill="#2da44f"/><path d="M129.500 747.500h11a11 11 0 0 1-5.500 9.600z" fill="#fbc116"/><path d="M129.500 747.500h10.500" stroke="#fbc116" stroke-width="4"/><circle cx="129.500" cy="747.500" r="5" fill="#fff"/><circle cx="129.500" cy="747.500" r="4" fill="#3c7be0"/><circle cx="136.500" cy="754.500" r="7.500" fill="#9a98a0"/><circle cx="136.500" cy="754" r="4.500" fill="#d8d6dc"/><circle cx="134.500" cy="752.500" r="1.300" fill="#333"/><circle cx="138.500" cy="752.500" r="1.300" fill="#333"/><path d="M134 757h5" stroke="#444" stroke-width="1.500"/><path d="M172 741a1.500 1.500 0 0 1 1.500-1.500h6l1.500 1.500h11.500a1.500 1.500 0 0 1 1.500 1.500V755H172z" fill="#f8d775"/><rect x="172" y="742" width="22" height="14" rx="1" fill="#fbe28f"/><path d="M176 757v-7.500h14V757h-4v-4.500h-6V757z" fill="#2fa5e6"/><rect x="173.500" y="740.300" width="5" height="1.200" fill="#5bc1f2"/><rect x="225.500" y="740" width="21" height="15" fill="#34a3e8"/><rect x="227" y="741.500" width="18" height="12" fill="#8fd0f7"/><circle cx="232.500" cy="746.500" r="3.300" fill="#1f78c8"/><path d="M232.500 746.500v-3.300a3.300 3.300 0 0 1 3.300 3.300z" fill="#f2b43c"/><path d="M238.500 743.500h5M238.500 745.500h5M238.500 747.500h5" stroke="#fff" stroke-width="1.200"/><path d="M229 751.500h7" stroke="#f2b43c" stroke-width="1.200"/><path d="M237 751.500h7" stroke="#1f78c8" stroke-width="1.200"/><path d="M277.500 751c0-6 5-10.500 12-10.500 6 0 9.500 3 9.500 7 0 5-4 7.500-8 6.500-2-.500-3 1.500-2 3s-1.500 2.500-4.500 1.500c-4.500-1.500-7-4-7-7.500z" fill="#c8e1f2" stroke="#9dbfd8" stroke-width="0.800"/><circle cx="281.500" cy="749" r="1.800" fill="#e0483c"/><circle cx="285.500" cy="745" r="1.800" fill="#5bbf4a"/><circle cx="290.500" cy="743.500" r="1.800" fill="#f2b43c"/><circle cx="287.500" cy="751" r="1.500" fill="#333"/><path d="M299.500 738.500l-7.500 16.500-1.300 4.500 2.800-3.800z" fill="#e58e2f"/><path d="M299.500 738.500l1.500-2.500-2.500-.500-1 2.500z" fill="#f0d7a8"/><rect x="343" y="739.500" width="9.500" height="16.500" fill="#fff" stroke="#2b5fb0" stroke-width="0.800"/><path d="M344.500 742.500h7M344.500 744.500h7M344.500 746.500h7M344.500 748.500h7M344.500 750.500h7M344.500 752.500h7" stroke="#2b5fb0" stroke-width="1"/><path d="M330.500 739l13.500-2.500v23l-13.500-2.500z" fill="#2b5fb0"/><path d="M333.300 744.500l1.700 7.500 2-6.500 2 6.500 1.700-7.500" fill="none" stroke="#fff" stroke-width="1.500"/><rect x="396" y="739.500" width="9.500" height="16.500" fill="#fff" stroke="#1e7145" stroke-width="0.800"/><path d="M397 742.500h8M397 745.500h8M397 748.500h8M397 751.500h8M401 740v16" stroke="#1e7145" stroke-width="1"/><path d="M383.500 739l13.500-2.500v23l-13.500-2.500z" fill="#1e7145"/><path d="M387 744.500l6 7.500M393 744.500l-6 7.500" fill="none" stroke="#fff" stroke-width="1.800"/><path d="M1123.500 751l6-6 6 6" fill="none" stroke="#fff" stroke-width="1.300"/><rect x="1148.500" y="741" width="9" height="5" fill="#f2f2f2"/><rect x="1145" y="745.500" width="16" height="7" rx="1" fill="#8a8a8a"/><rect x="1148.500" y="750.500" width="9" height="5.500" fill="#e8f1fb"/><rect x="1151" y="752" width="4" height="2.500" fill="#2f7fd0"/><rect x="1145" y="745.500" width="16" height="2" fill="#b0b0b0"/><g fill="none" stroke="#fff" stroke-width="1.200"><rect x="1173.500" y="742.500" width="11.500" height="9"/><path d="M1179 751.500v3.500M1175.500 755.200h7.500M1171 742v13"/><rect x="1169.500" y="742.500" width="3.500" height="3.500" fill="#222"/></g><g fill="none" stroke="#fff" stroke-width="1.200"><path d="M1193.500 745.500h2.500l3.500-3.500v13l-3.500-3.500h-2.500z"/><path d="M1201.500 746a3.500 3.500 0 0 1 0 5"/><path d="M1204 743.500a7 7 0 0 1 0 10" stroke="#bbb"/><path d="M1206.500 741.500a10 10 0 0 1 0 14" stroke="#777"/></g><path d="M1325.500 740.500h15.500v11h-9.500l-3 3v-3h-3z" fill="#fff"/><path d="M1328 743.500h10.500M1328 746h10.500M1328 748.500h7" stroke="#222" stroke-width="1"/><circle cx="1341" cy="755" r="7.500" fill="#222" stroke="#aaa" stroke-width="1"/></svg>
<span class="t" style='left:611.50px;top:7.80px;font-family:"Liberation Sans", sans-serif;font-size:11.5px;line-height:11.5px;color:#444444;transform:scaleX(1.0117);'>Memos Pagos 2022 - Word</span>
<span class="t" style='left:1231.00px;top:5.00px;font-family:"Liberation Sans", sans-serif;font-size:13.5px;line-height:13.5px;color:#666;font-weight:700;transform:scaleX(0.8750);'>?</span>
<span class="t" style='left:4.50px;top:32.60px;font-family:"Liberation Sans", sans-serif;font-size:11.5px;line-height:11.5px;color:#fff;transform:scaleX(0.9437);'>ARCHIVO</span>
<span class="t" style='left:75.51px;top:32.60px;font-family:"Liberation Sans", sans-serif;font-size:11.5px;line-height:11.5px;color:#2b579a;transform:scaleX(0.9943);'>INICIO</span>
<span class="t" style='left:139.49px;top:32.60px;font-family:"Liberation Sans", sans-serif;font-size:11.5px;line-height:11.5px;color:#444444;transform:scaleX(0.9053);'>INSERTAR</span>
<span class="t" style='left:220.30px;top:32.60px;font-family:"Liberation Sans", sans-serif;font-size:11.5px;line-height:11.5px;color:#444444;transform:scaleX(0.9129);'>DISEÑO</span>
<span class="t" style='left:290.50px;top:32.60px;font-family:"Liberation Sans", sans-serif;font-size:11.5px;line-height:11.5px;color:#444444;transform:scaleX(0.9298);'>DISEÑO DE PÁGINA</span>
<span class="t" style='left:422.50px;top:32.60px;font-family:"Liberation Sans", sans-serif;font-size:11.5px;line-height:11.5px;color:#444444;transform:scaleX(0.8743);'>REFERENCIAS</span>
<span class="t" style='left:523.60px;top:32.60px;font-family:"Liberation Sans", sans-serif;font-size:11.5px;line-height:11.5px;color:#444444;transform:scaleX(0.9262);'>CORRESPONDENCIA</span>
<span class="t" style='left:662.00px;top:32.60px;font-family:"Liberation Sans", sans-serif;font-size:11.5px;line-height:11.5px;color:#444444;transform:scaleX(0.8768);'>REVISAR</span>
<span class="t" style='left:734.70px;top:32.60px;font-family:"Liberation Sans", sans-serif;font-size:11.5px;line-height:11.5px;color:#444444;transform:scaleX(0.9142);'>VISTA</span>
<span class="t" style='left:1266.48px;top:32.00px;font-family:"Liberation Sans", sans-serif;font-size:11.5px;line-height:11.5px;color:#444444;transform:scaleX(1.0195);'>Iniciar sesión</span>
<span class="t" style='left:38.50px;top:129.00px;font-family:"Liberation Sans", sans-serif;font-size:11.5px;line-height:11.5px;color:#666666;transform:scaleX(0.9629);'>Portapapeles</span>
<span class="t" style='left:266.60px;top:129.00px;font-family:"Liberation Sans", sans-serif;font-size:11.5px;line-height:11.5px;color:#666666;transform:scaleX(0.9716);'>Fuente</span>
<span class="t" style='left:510.00px;top:129.00px;font-family:"Liberation Sans", sans-serif;font-size:11.5px;line-height:11.5px;color:#666666;transform:scaleX(0.9379);'>Párrafo</span>
<span class="t" style='left:892.00px;top:129.00px;font-family:"Liberation Sans", sans-serif;font-size:11.5px;line-height:11.5px;color:#666666;transform:scaleX(0.9085);'>Estilos</span>
<span class="t" style='left:1216.50px;top:129.00px;font-family:"Liberation Sans", sans-serif;font-size:11.5px;line-height:11.5px;color:#666666;transform:scaleX(0.9914);'>Edición</span>
<span class="t" style='left:10.50px;top:93.80px;font-family:"Liberation Sans", sans-serif;font-size:11.5px;line-height:11.5px;color:#444444;transform:scaleX(0.9560);'>Pegar</span>
<span class="t" style='left:69.00px;top:60.00px;font-family:"Liberation Sans", sans-serif;font-size:11.5px;line-height:11.5px;color:#9a9a9a;transform:scaleX(0.9962);'>Cortar</span>
<span class="t" style='left:69.00px;top:83.00px;font-family:"Liberation Sans", sans-serif;font-size:11.5px;line-height:11.5px;color:#9a9a9a;transform:scaleX(0.9839);'>Copiar</span>
<span class="t" style='left:69.00px;top:106.00px;font-family:"Liberation Sans", sans-serif;font-size:11.5px;line-height:11.5px;color:#444444;transform:scaleX(1.0507);'>Copiar formato</span>
<span class="t" style='left:168.50px;top:68.00px;font-family:"Liberation Sans", sans-serif;font-size:11.5px;line-height:11.5px;color:#222;transform:scaleX(1.0299);'>Century Gothi</span>
<span class="t" style='left:262.50px;top:68.00px;font-family:"Liberation Sans", sans-serif;font-size:11.5px;line-height:11.5px;color:#222;transform:scaleX(0.8471);'>12</span>
<span class="t" style='left:308.30px;top:66.50px;font-family:"Liberation Sans", sans-serif;font-size:13px;line-height:13px;color:#555;transform:scaleX(0.9889);'>A</span>
<span class="t" style='left:331.00px;top:68.50px;font-family:"Liberation Sans", sans-serif;font-size:10.5px;line-height:10.5px;color:#555;transform:scaleX(1.0714);'>A</span>
<span class="t" style='left:358.50px;top:66.50px;font-family:"Liberation Sans", sans-serif;font-size:12px;line-height:12px;color:#555;transform:scaleX(0.9664);'>Aa</span>
<span class="t" style='left:401.50px;top:65.00px;font-family:"Liberation Sans", sans-serif;font-size:11.5px;line-height:11.5px;color:#666;transform:scaleX(0.8125);'>A</span>
<span class="t" style='left:171.50px;top:97.30px;font-family:"Liberation Sans", sans-serif;font-size:12px;line-height:12px;color:#444;font-weight:700;transform:scaleX(1.0625);'>N</span>
<span class="t" style='left:193.50px;top:97.30px;font-family:"Liberation Sans", sans-serif;font-size:12px;line-height:12px;color:#444;font-weight:700;font-style:italic;transform:scaleX(0.8000);'>K</span>
<span class="t" style='left:216.50px;top:96.30px;font-family:"Liberation Sans", sans-serif;font-size:12px;line-height:12px;color:#444;font-weight:700;transform:scaleX(0.8750);'>S</span>
<span class="t" style='left:246.00px;top:97.50px;font-family:"Liberation Sans", sans-serif;font-size:10.5px;line-height:10.5px;color:#555;transform:scaleX(0.9593);text-decoration:line-through;'>abc</span>
<span class="t" style='left:270.00px;top:97.00px;font-family:"Liberation Sans", sans-serif;font-size:12.5px;line-height:12.5px;color:#444;font-weight:700;transform:scaleX(1.0000);'>x</span>
<span class="t" style='left:278.50px;top:104.50px;font-family:"Liberation Sans", sans-serif;font-size:6.5px;line-height:6.5px;color:#2e6fb7;font-weight:700;transform:scaleX(0.8750);'>2</span>
<span class="t" style='left:292.00px;top:97.00px;font-family:"Liberation Sans", sans-serif;font-size:12.5px;line-height:12.5px;color:#444;font-weight:700;transform:scaleX(1.0000);'>x</span>
<span class="t" style='left:300.50px;top:96.50px;font-family:"Liberation Sans", sans-serif;font-size:6.5px;line-height:6.5px;color:#2e6fb7;font-weight:700;transform:scaleX(0.8750);'>2</span>
<span class="t" style='left:322.50px;top:94.00px;font-family:"Liberation Sans", sans-serif;font-size:16.5px;line-height:16.5px;color:#fff;font-weight:700;transform:scaleX(1.0833);-webkit-text-stroke:1px #3a78c3;text-shadow:0 0 1.500px #6f9fd8;paint-order:stroke fill;'>A</span>
<span class="t" style='left:354.00px;top:96.00px;font-family:"Liberation Sans", sans-serif;font-size:9px;line-height:9px;color:#555;font-weight:700;transform:scaleX(0.8178);'>ab</span>
<span class="t" style='left:391.00px;top:95.00px;font-family:"Liberation Sans", sans-serif;font-size:13px;line-height:13px;color:#555;transform:scaleX(1.1111);'>A</span>
<span class="t" style='left:466.00px;top:62.70px;font-family:"Liberation Sans", sans-serif;font-size:6px;line-height:6px;color:#3d78bd;font-weight:700;transform:scaleX(0.8750);'>1</span>
<span class="t" style='left:466.00px;top:68.70px;font-family:"Liberation Sans", sans-serif;font-size:6px;line-height:6px;color:#3d78bd;font-weight:700;transform:scaleX(0.8750);'>2</span>
<span class="t" style='left:466.00px;top:74.70px;font-family:"Liberation Sans", sans-serif;font-size:6px;line-height:6px;color:#3d78bd;font-weight:700;transform:scaleX(0.8750);'>3</span>
<span class="t" style='left:499.00px;top:62.70px;font-family:"Liberation Sans", sans-serif;font-size:6px;line-height:6px;color:#3d78bd;font-weight:700;transform:scaleX(0.7500);'>1</span>
<span class="t" style='left:503.50px;top:68.50px;font-family:"Liberation Sans", sans-serif;font-size:6.5px;line-height:6.5px;color:#3d78bd;font-weight:700;transform:scaleX(0.8750);'>a</span>
<span class="t" style='left:508.50px;top:74.70px;font-family:"Liberation Sans", sans-serif;font-size:6.5px;line-height:6.5px;color:#3d78bd;font-weight:700;transform:scaleX(0.7500);'>i</span>
<span class="t" style='left:596.00px;top:63.00px;font-family:"Liberation Sans", sans-serif;font-size:9.5px;line-height:9.5px;color:#3d78bd;font-weight:700;transform:scaleX(0.9286);'>A</span>
<span class="t" style='left:596.00px;top:71.00px;font-family:"Liberation Sans", sans-serif;font-size:9.5px;line-height:9.5px;color:#8a4fb0;font-weight:700;transform:scaleX(1.0000);'>Z</span>
<span class="t" style='left:628.00px;top:64.50px;font-family:"Liberation Sans", sans-serif;font-size:14px;line-height:14px;color:#555;transform:scaleX(1.4286);'>¶</span>
<span class="t" style='left:662.00px;top:72.80px;font-family:"Liberation Sans", sans-serif;font-size:12.5px;line-height:12.5px;color:#111;transform:scaleX(0.9526);'>AaBbCcDc</span>
<span class="t" style='left:667.00px;top:97.80px;font-family:"Liberation Sans", sans-serif;font-size:11.5px;line-height:11.5px;color:#444444;transform:scaleX(1.0245);'>¶ Normal</span>
<span class="t" style='left:734.00px;top:70.50px;font-family:"Liberation Sans", sans-serif;font-size:15.5px;line-height:15.5px;color:#000;font-weight:700;transform:scaleX(0.9230);'>AaBbCc</span>
<span class="t" style='left:731.50px;top:97.80px;font-family:"Liberation Sans", sans-serif;font-size:11.5px;line-height:11.5px;color:#444444;transform:scaleX(0.9810);'>Normal Sa...</span>
<span class="t" style='left:806.00px;top:70.30px;font-family:"Liberation Sans", sans-serif;font-size:17px;line-height:17px;color:#2e74b5;transform:scaleX(0.8351);-webkit-text-stroke:0.220px #fff;'>AaBbCc</span>
<span class="t" style='left:815.00px;top:97.80px;font-family:"Liberation Sans", sans-serif;font-size:11.5px;line-height:11.5px;color:#444444;transform:scaleX(1.0275);'>Título 1</span>
<span class="t" style='left:878.00px;top:70.00px;font-family:"Liberation Sans", sans-serif;font-size:15px;line-height:15px;color:#2e74b5;transform:scaleX(0.8784);-webkit-text-stroke:0.250px #fff;'>AaBbCcD</span>
<span class="t" style='left:887.00px;top:97.80px;font-family:"Liberation Sans", sans-serif;font-size:11.5px;line-height:11.5px;color:#444444;transform:scaleX(1.0275);'>Título 2</span>
<span class="t" style='left:950.00px;top:70.00px;font-family:"Liberation Serif", serif;font-size:15.5px;line-height:15.5px;color:#000;font-weight:700;transform:scaleX(0.9448);'>AaBbCc</span>
<span class="t" style='left:959.00px;top:97.80px;font-family:"Liberation Sans", sans-serif;font-size:11.5px;line-height:11.5px;color:#444444;transform:scaleX(1.0275);'>Título 5</span>
<span class="t" style='left:1022.00px;top:72.80px;font-family:"Liberation Sans", sans-serif;font-size:12.5px;line-height:12.5px;color:#1f4d78;transform:scaleX(0.9526);'>AaBbCcDc</span>
<span class="t" style='left:1031.00px;top:97.80px;font-family:"Liberation Sans", sans-serif;font-size:11.5px;line-height:11.5px;color:#444444;transform:scaleX(1.0538);'>Título 6</span>
<span class="t" style='left:1105.50px;top:97.80px;font-family:"Liberation Sans", sans-serif;font-size:11.5px;line-height:11.5px;color:#444444;transform:scaleX(0.9744);'>Puesto</span>
<span class="t" style='left:1209.50px;top:60.00px;font-family:"Liberation Sans", sans-serif;font-size:11.5px;line-height:11.5px;color:#444444;transform:scaleX(0.9593);'>Buscar</span>
<span class="t" style='left:1190.00px;top:78.00px;font-family:"Liberation Sans", sans-serif;font-size:10.5px;line-height:10.5px;color:#666;transform:scaleX(1.0980);'>ab</span>
<span class="t" style='left:1195.00px;top:85.00px;font-family:"Liberation Sans", sans-serif;font-size:10.5px;line-height:10.5px;color:#444;font-weight:700;transform:scaleX(1.0000);'>a</span>
<span class="t" style='left:1201.00px;top:85.00px;font-family:"Liberation Sans", sans-serif;font-size:10.5px;line-height:10.5px;color:#2e6fb7;font-weight:700;transform:scaleX(0.9167);'>c</span>
<span class="t" style='left:1209.50px;top:83.00px;font-family:"Liberation Sans", sans-serif;font-size:11.5px;line-height:11.5px;color:#444444;transform:scaleX(0.9732);'>Reemplazar</span>
<span class="t" style='left:1209.50px;top:106.00px;font-family:"Liberation Sans", sans-serif;font-size:11.5px;line-height:11.5px;color:#444444;transform:scaleX(0.9791);'>Seleccionar</span>
<span class="t" style='left:286.50px;top:148.90px;font-family:"Liberation Sans", sans-serif;font-size:9.5px;line-height:9.5px;color:#444;transform:scaleX(0.9800);'>3</span>
<span class="t" style='left:324.00px;top:148.90px;font-family:"Liberation Sans", sans-serif;font-size:9.5px;line-height:9.5px;color:#444;transform:scaleX(1.0400);'>2</span>
<span class="t" style='left:361.80px;top:148.90px;font-family:"Liberation Sans", sans-serif;font-size:9.5px;line-height:9.5px;color:#444;transform:scaleX(1.0400);'>1</span>
<span class="t" style='left:437.40px;top:148.90px;font-family:"Liberation Sans", sans-serif;font-size:9.5px;line-height:9.5px;color:#444;transform:scaleX(1.0400);'>1</span>
<span class="t" style='left:475.20px;top:148.90px;font-family:"Liberation Sans", sans-serif;font-size:9.5px;line-height:9.5px;color:#444;transform:scaleX(1.0400);'>2</span>
<span class="t" style='left:513.00px;top:148.90px;font-family:"Liberation Sans", sans-serif;font-size:9.5px;line-height:9.5px;color:#444;transform:scaleX(1.0400);'>3</span>
<span class="t" style='left:550.80px;top:148.90px;font-family:"Liberation Sans", sans-serif;font-size:9.5px;line-height:9.5px;color:#444;transform:scaleX(1.0400);'>4</span>
<span class="t" style='left:588.60px;top:148.90px;font-family:"Liberation Sans", sans-serif;font-size:9.5px;line-height:9.5px;color:#444;transform:scaleX(1.0400);'>5</span>
<span class="t" style='left:626.40px;top:148.90px;font-family:"Liberation Sans", sans-serif;font-size:9.5px;line-height:9.5px;color:#444;transform:scaleX(1.0400);'>6</span>
<span class="t" style='left:664.20px;top:148.90px;font-family:"Liberation Sans", sans-serif;font-size:9.5px;line-height:9.5px;color:#444;transform:scaleX(1.0400);'>7</span>
<span class="t" style='left:702.00px;top:148.90px;font-family:"Liberation Sans", sans-serif;font-size:9.5px;line-height:9.5px;color:#444;transform:scaleX(1.0400);'>8</span>
<span class="t" style='left:739.80px;top:148.90px;font-family:"Liberation Sans", sans-serif;font-size:9.5px;line-height:9.5px;color:#444;transform:scaleX(1.0400);'>9</span>
<span class="t" style='left:775.00px;top:148.90px;font-family:"Liberation Sans", sans-serif;font-size:9.5px;line-height:9.5px;color:#444;transform:scaleX(1.0113);'>10</span>
<span class="t" style='left:812.80px;top:148.90px;font-family:"Liberation Sans", sans-serif;font-size:9.5px;line-height:9.5px;color:#444;transform:scaleX(1.0858);'>11</span>
<span class="t" style='left:850.60px;top:148.90px;font-family:"Liberation Sans", sans-serif;font-size:9.5px;line-height:9.5px;color:#444;transform:scaleX(1.0113);'>12</span>
<span class="t" style='left:888.40px;top:148.90px;font-family:"Liberation Sans", sans-serif;font-size:9.5px;line-height:9.5px;color:#444;transform:scaleX(1.0113);'>13</span>
<span class="t" style='left:926.20px;top:148.90px;font-family:"Liberation Sans", sans-serif;font-size:9.5px;line-height:9.5px;color:#444;transform:scaleX(1.0113);'>14</span>
<span class="t" style='left:1001.80px;top:148.90px;font-family:"Liberation Sans", sans-serif;font-size:9.5px;line-height:9.5px;color:#444;transform:scaleX(1.0113);'>16</span>
<span class="t" style='left:1039.60px;top:148.90px;font-family:"Liberation Sans", sans-serif;font-size:9.5px;line-height:9.5px;color:#444;transform:scaleX(1.0113);'>17</span>
<span class="t" style='left:763.06px;top:168.30px;font-family:"Liberation Sans", sans-serif;font-size:16.5px;line-height:16.5px;color:#f4faf5;transform:scaleX(0.9367);'>RUC : 1768120600001</span>
<span class="t" style='left:775.60px;top:202.20px;font-family:"Liberation Sans", sans-serif;font-size:14.5px;line-height:14.5px;color:#f4faf5;transform:scaleX(0.9157);'>(02)2773220 / 2773300</span>
<span class="t" style='left:775.00px;top:226.40px;font-family:"Liberation Sans", sans-serif;font-size:14.5px;line-height:14.5px;color:#f4faf5;transform:scaleX(1.0017);'>gadprvallehermoso@hotmail.com</span>
<span class="t" style='left:776.01px;top:249.80px;font-family:"Liberation Sans", sans-serif;font-size:14.5px;line-height:14.5px;color:#f4faf5;transform:scaleX(1.0136);clip-path:inset(0 0 1.30px 0);'>www.vallehermoso.gob.ec</span>
<span class="t" style='left:820.40px;top:287.00px;font-family:"Liberation Serif", serif;font-size:22.5px;line-height:22.5px;color:#808080;font-weight:700;transform:scaleX(1.0331);'>ADMINISTRATIVO</span>
<span class="t" style='left:536.47px;top:320.00px;font-family:"Liberation Sans", sans-serif;font-size:16.5px;line-height:16.5px;color:#000;font-weight:700;transform:scaleX(0.9316);'>MEMORANDUM</span>
<span class="t" style='left:662.60px;top:320.00px;font-family:"Liberation Sans", sans-serif;font-size:16.5px;line-height:16.5px;color:#000;font-weight:700;transform:scaleX(0.9378);'>GADPRVH-TS-031-2022</span>
<span class="t" style='left:409.65px;top:361.00px;font-family:"Liberation Sans", sans-serif;font-size:16.5px;line-height:16.5px;color:#000;font-weight:700;transform:scaleX(0.8487);'>DE:</span>
<span class="t" style='left:497.76px;top:360.00px;font-family:"Liberation Sans", sans-serif;font-size:16.5px;line-height:16.5px;color:#000;transform:scaleX(1.0371);-webkit-text-stroke:0.220px #fff;'>Lic Rosalba Maribel Lozada Garcés.</span>
<span class="t" style='left:497.50px;top:381.00px;font-family:"Liberation Sans", sans-serif;font-size:16.5px;line-height:16.5px;color:#000;font-weight:700;transform:scaleX(0.8810);'>TESORERA DEL GAD PARROQUIAL VALLE HERMOSO</span>
<span class="t" style='left:409.57px;top:420.00px;font-family:"Liberation Sans", sans-serif;font-size:16.5px;line-height:16.5px;color:#000;font-weight:700;transform:scaleX(0.9273);'>PARA:</span>
<span class="t" style='left:497.00px;top:419.00px;font-family:"Liberation Sans", sans-serif;font-size:16.5px;line-height:16.5px;color:#000;transform:scaleX(1.0357);-webkit-text-stroke:0.220px #fff;'>Sr. Washington Morales Chávez</span>
<span class="t" style='left:496.12px;top:439.00px;font-family:"Liberation Sans", sans-serif;font-size:16.5px;line-height:16.5px;color:#000;font-weight:700;transform:scaleX(0.8830);'>PRESIDENTE DEL GAD PARROQUIAL VALLE HERMOSO.</span>
<span class="t" style='left:409.58px;top:479.00px;font-family:"Liberation Sans", sans-serif;font-size:16.5px;line-height:16.5px;color:#000;font-weight:700;transform:scaleX(0.9192);'>FECHA:</span>
<span class="t" style='left:497.00px;top:478.00px;font-family:"Liberation Sans", sans-serif;font-size:16.5px;line-height:16.5px;color:#000;transform:scaleX(1.0460);-webkit-text-stroke:0.220px #fff;'>24 de febrero del 2022</span>
<span class="t" style='left:411.00px;top:517.00px;font-family:"Liberation Sans", sans-serif;font-size:16.5px;line-height:16.5px;color:#000;font-weight:700;transform:scaleX(0.8791);'>ASUNTO:</span>
<span class="t" style='left:497.15px;top:517.00px;font-family:"Liberation Sans", sans-serif;font-size:16.5px;line-height:16.5px;color:#000;transform:scaleX(0.8526);-webkit-text-stroke:0.220px #fff;'>EN EL TEXTO</span>
<span class="t" style='left:403.79px;top:566.00px;font-family:"Liberation Sans", sans-serif;font-size:16.5px;line-height:16.5px;color:#000;transform:scaleX(0.9094);-webkit-text-stroke:0.220px #fff;'>Por</span>
<span class="t" style='left:433.88px;top:566.00px;font-family:"Liberation Sans", sans-serif;font-size:16.5px;line-height:16.5px;color:#000;transform:scaleX(1.1174);-webkit-text-stroke:0.220px #fff;'>medio</span>
<span class="t" style='left:491.30px;top:566.00px;font-family:"Liberation Sans", sans-serif;font-size:16.5px;line-height:16.5px;color:#000;transform:scaleX(1.0912);-webkit-text-stroke:0.220px #fff;'>del</span>
<span class="t" style='left:520.33px;top:566.00px;font-family:"Liberation Sans", sans-serif;font-size:16.5px;line-height:16.5px;color:#000;transform:scaleX(1.0724);-webkit-text-stroke:0.220px #fff;'>presente</span>
<span class="t" style='left:594.75px;top:566.00px;font-family:"Liberation Sans", sans-serif;font-size:16.5px;line-height:16.5px;color:#000;transform:scaleX(1.0531);-webkit-text-stroke:0.220px #fff;'>me</span>
<span class="t" style='left:625.03px;top:566.00px;font-family:"Liberation Sans", sans-serif;font-size:16.5px;line-height:16.5px;color:#000;transform:scaleX(1.0716);-webkit-text-stroke:0.220px #fff;'>permito</span>
<span class="t" style='left:691.00px;top:566.00px;font-family:"Liberation Sans", sans-serif;font-size:16.5px;line-height:16.5px;color:#000;transform:scaleX(0.9923);-webkit-text-stroke:0.220px #fff;'>solicitar</span>
<span class="t" style='left:754.70px;top:566.00px;font-family:"Liberation Sans", sans-serif;font-size:16.5px;line-height:16.5px;color:#000;transform:scaleX(0.9900);-webkit-text-stroke:0.220px #fff;'>a</span>
<span class="t" style='left:770.78px;top:566.00px;font-family:"Liberation Sans", sans-serif;font-size:16.5px;line-height:16.5px;color:#000;transform:scaleX(1.0207);-webkit-text-stroke:0.220px #fff;'>usted</span>
<span class="t" style='left:820.60px;top:566.00px;font-family:"Liberation Sans", sans-serif;font-size:16.5px;line-height:16.5px;color:#000;font-weight:700;transform:scaleX(0.8688);'>AUTORICE</span>
<span class="t" style='left:895.47px;top:566.00px;font-family:"Liberation Sans", sans-serif;font-size:16.5px;line-height:16.5px;color:#000;transform:scaleX(0.8333);-webkit-text-stroke:0.220px #fff;'>,</span>
<span class="t" style='left:906.20px;top:566.00px;font-family:"Liberation Sans", sans-serif;font-size:16.5px;line-height:16.5px;color:#000;transform:scaleX(0.9937);-webkit-text-stroke:0.220px #fff;'>el</span>
<span class="t" style='left:925.93px;top:566.00px;font-family:"Liberation Sans", sans-serif;font-size:16.5px;line-height:16.5px;color:#000;transform:scaleX(1.1652);-webkit-text-stroke:0.220px #fff;'>pago</span>
<span class="t" style='left:404.20px;top:587.00px;font-family:"Liberation Sans", sans-serif;font-size:16.5px;line-height:16.5px;color:#000;transform:scaleX(0.9958);-webkit-text-stroke:0.220px #fff;'>de</span>
<span class="t" style='left:426.60px;top:587.00px;font-family:"Liberation Sans", sans-serif;font-size:16.5px;line-height:16.5px;color:#000;transform:scaleX(1.0027);-webkit-text-stroke:0.220px #fff;'>la</span>
<span class="t" style='left:446.06px;top:587.00px;font-family:"Liberation Sans", sans-serif;font-size:16.5px;line-height:16.5px;color:#000;transform:scaleX(1.0402);-webkit-text-stroke:0.220px #fff;'>Factura</span>
<span class="t" style='left:514.00px;top:587.00px;font-family:"Liberation Sans", sans-serif;font-size:16.5px;line-height:16.5px;color:#000;transform:scaleX(0.7400);-webkit-text-stroke:0.220px #fff;'>#</span>
<span class="t" style='left:526.30px;top:587.00px;font-family:"Liberation Sans", sans-serif;font-size:16.5px;line-height:16.5px;color:#000;transform:scaleX(0.9726);-webkit-text-stroke:0.220px #fff;'>009-001-000043605</span>
<span class="t" style='left:676.00px;top:587.00px;font-family:"Liberation Sans", sans-serif;font-size:16.5px;line-height:16.5px;color:#000;transform:scaleX(1.0656);-webkit-text-stroke:0.220px #fff;'>correspondiente</span>
<span class="t" style='left:808.00px;top:587.00px;font-family:"Liberation Sans", sans-serif;font-size:16.5px;line-height:16.5px;color:#000;transform:scaleX(0.9300);-webkit-text-stroke:0.220px #fff;'>a</span>
<span class="t" style='left:821.31px;top:587.00px;font-family:"Liberation Sans", sans-serif;font-size:16.5px;line-height:16.5px;color:#000;transform:scaleX(0.9869);-webkit-text-stroke:0.220px #fff;'>la</span>
<span class="t" style='left:840.80px;top:587.00px;font-family:"Liberation Sans", sans-serif;font-size:16.5px;line-height:16.5px;color:#000;transform:scaleX(1.1189);-webkit-text-stroke:0.220px #fff;'>cancelación</span>
<span class="t" style='left:942.52px;top:587.00px;font-family:"Liberation Sans", sans-serif;font-size:16.5px;line-height:16.5px;color:#000;transform:scaleX(1.0791);-webkit-text-stroke:0.220px #fff;'>por</span>
<span class="t" style='left:404.20px;top:608.10px;font-family:"Liberation Sans", sans-serif;font-size:16.5px;line-height:16.5px;color:#000;transform:scaleX(1.0439);-webkit-text-stroke:0.220px #fff;'>adquisición</span>
<span class="t" style='left:497.70px;top:608.10px;font-family:"Liberation Sans", sans-serif;font-size:16.5px;line-height:16.5px;color:#000;transform:scaleX(1.0233);-webkit-text-stroke:0.220px #fff;'>de</span>
<span class="t" style='left:522.57px;top:608.10px;font-family:"Liberation Sans", sans-serif;font-size:16.5px;line-height:16.5px;color:#000;transform:scaleX(1.0286);-webkit-text-stroke:0.220px #fff;'>materiales</span>
<span class="t" style='left:608.00px;top:608.10px;font-family:"Liberation Sans", sans-serif;font-size:16.5px;line-height:16.5px;color:#000;transform:scaleX(0.9958);-webkit-text-stroke:0.220px #fff;'>de</span>
<span class="t" style='left:633.50px;top:608.10px;font-family:"Liberation Sans", sans-serif;font-size:16.5px;line-height:16.5px;color:#000;transform:scaleX(1.0491);-webkit-text-stroke:0.220px #fff;'>oficina</span>
<span class="t" style='left:691.13px;top:608.10px;font-family:"Liberation Sans", sans-serif;font-size:16.5px;line-height:16.5px;color:#000;transform:scaleX(0.9702);-webkit-text-stroke:0.220px #fff;'>(resmas</span>
<span class="t" style='left:756.90px;top:608.10px;font-family:"Liberation Sans", sans-serif;font-size:16.5px;line-height:16.5px;color:#000;transform:scaleX(1.0233);-webkit-text-stroke:0.220px #fff;'>de</span>
<span class="t" style='left:781.65px;top:608.10px;font-family:"Liberation Sans", sans-serif;font-size:16.5px;line-height:16.5px;color:#000;transform:scaleX(1.1471);-webkit-text-stroke:0.220px #fff;'>papel</span>
<span class="t" style='left:832.52px;top:608.10px;font-family:"Liberation Sans", sans-serif;font-size:16.5px;line-height:16.5px;color:#000;transform:scaleX(1.1765);-webkit-text-stroke:0.220px #fff;'>bond</span>
<span class="t" style='left:882.10px;top:608.10px;font-family:"Liberation Sans", sans-serif;font-size:16.5px;line-height:16.5px;color:#000;transform:scaleX(0.9604);-webkit-text-stroke:0.220px #fff;'>A4),</span>
<span class="t" style='left:917.26px;top:608.10px;font-family:"Liberation Sans", sans-serif;font-size:16.5px;line-height:16.5px;color:#000;transform:scaleX(1.0363);-webkit-text-stroke:0.220px #fff;'>por</span>
<span class="t" style='left:949.54px;top:608.10px;font-family:"Liberation Sans", sans-serif;font-size:16.5px;line-height:16.5px;color:#000;transform:scaleX(1.0596);-webkit-text-stroke:0.220px #fff;'>un</span>
<span class="t" style='left:404.20px;top:629.90px;font-family:"Liberation Sans", sans-serif;font-size:16.5px;line-height:16.5px;color:#000;transform:scaleX(0.9953);-webkit-text-stroke:0.220px #fff;'>valor</span>
<span class="t" style='left:457.30px;top:629.90px;font-family:"Liberation Sans", sans-serif;font-size:16.5px;line-height:16.5px;color:#000;transform:scaleX(1.0508);-webkit-text-stroke:0.220px #fff;'>de</span>
<span class="t" style='left:494.00px;top:629.90px;font-family:"Liberation Sans", sans-serif;font-size:16.5px;line-height:16.5px;color:#000;transform:scaleX(0.9444);-webkit-text-stroke:0.220px #fff;'>$</span>
<span class="t" style='left:518.90px;top:629.90px;font-family:"Liberation Sans", sans-serif;font-size:16.5px;line-height:16.5px;color:#000;transform:scaleX(0.9704);-webkit-text-stroke:0.220px #fff;'>295,00</span>
<span class="t" style='left:584.88px;top:629.90px;font-family:"Liberation Sans", sans-serif;font-size:16.5px;line-height:16.5px;color:#000;transform:scaleX(0.9189);-webkit-text-stroke:0.220px #fff;'>(DOSCIENTOS</span>
<span class="t" style='left:706.52px;top:629.90px;font-family:"Liberation Sans", sans-serif;font-size:16.5px;line-height:16.5px;color:#000;transform:scaleX(0.9764);-webkit-text-stroke:0.220px #fff;'>NOVENTA</span>
<span class="t" style='left:801.90px;top:629.90px;font-family:"Liberation Sans", sans-serif;font-size:16.5px;line-height:16.5px;color:#000;transform:scaleX(0.7000);-webkit-text-stroke:0.220px #fff;'>Y</span>
<span class="t" style='left:826.70px;top:629.90px;font-family:"Liberation Sans", sans-serif;font-size:16.5px;line-height:16.5px;color:#000;transform:scaleX(1.0182);-webkit-text-stroke:0.220px #fff;'>CINCO</span>
<span class="t" style='left:898.71px;top:629.90px;font-family:"Liberation Sans", sans-serif;font-size:16.5px;line-height:16.5px;color:#000;transform:scaleX(0.8889);-webkit-text-stroke:0.220px #fff;'>DÓLARES</span>
<span class="t" style='left:404.20px;top:650.00px;font-family:"Liberation Sans", sans-serif;font-size:16.5px;line-height:16.5px;color:#000;transform:scaleX(0.9574);-webkit-text-stroke:0.220px #fff;'>AMERICANOS</span>
<span class="t" style='left:516.30px;top:650.00px;font-family:"Liberation Sans", sans-serif;font-size:16.5px;line-height:16.5px;color:#000;transform:scaleX(1.0238);-webkit-text-stroke:0.220px #fff;'>CON</span>
<span class="t" style='left:558.20px;top:650.00px;font-family:"Liberation Sans", sans-serif;font-size:16.5px;line-height:16.5px;color:#000;transform:scaleX(1.0440);-webkit-text-stroke:0.220px #fff;'>00/100).</span>
<span class="t" style='left:7.50px;top:712.00px;font-family:"Liberation Sans", sans-serif;font-size:11.5px;line-height:11.5px;color:#fff;transform:scaleX(0.8917);'>PÁGINA 31 DE 35</span>
<span class="t" style='left:111.00px;top:712.00px;font-family:"Liberation Sans", sans-serif;font-size:11.5px;line-height:11.5px;color:#fff;transform:scaleX(0.8688);'>4141 PALABRAS</span>
<span class="t" style='left:240.50px;top:712.00px;font-family:"Liberation Sans", sans-serif;font-size:11.5px;line-height:11.5px;color:#fff;transform:scaleX(0.8705);'>ESPAÑOL (ECUADOR)</span>
<span class="t" style='left:1328.00px;top:712.00px;font-family:"Liberation Sans", sans-serif;font-size:11.5px;line-height:11.5px;color:#fff;transform:scaleX(0.8956);'>100 %</span>
<span class="t" style='left:1222.00px;top:743.00px;font-family:"Liberation Sans", sans-serif;font-size:11.5px;line-height:11.5px;color:#fff;transform:scaleX(0.7498);'>ESP</span>
<span class="t" style='left:1268.00px;top:733.80px;font-family:"Liberation Sans", sans-serif;font-size:11.5px;line-height:11.5px;color:#fff;transform:scaleX(0.8984);'>15:13</span>
<span class="t" style='left:1256.00px;top:752.00px;font-family:"Liberation Sans", sans-serif;font-size:11.5px;line-height:11.5px;color:#fff;transform:scaleX(0.9948);'>12/7/2022</span>
<span class="t" style='left:1338.00px;top:750.00px;font-family:"Liberation Sans", sans-serif;font-size:10.5px;line-height:10.5px;color:#fff;font-weight:700;transform:scaleX(1.0833);'>4</span>
</div></body></html>
